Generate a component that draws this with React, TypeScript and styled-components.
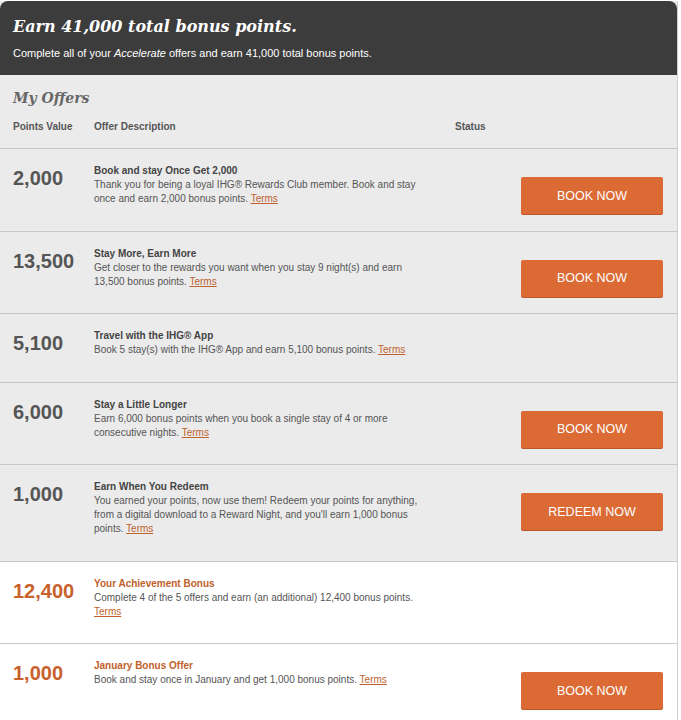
import React from 'react';
import styled, { createGlobalStyle } from 'styled-components';

const GlobalStyle = createGlobalStyle`
  body {
    margin: 0;
    background: #ffffff;
    font-family: "Liberation Sans", Arial, sans-serif;
  }
`;

const Panel = styled.div`
  width: 677px;
  margin-top: 1px;
  border-right: 1px solid #cfcfcf;
  background: #ebebeb;
`;

const Banner = styled.div`
  background: #3c3c3c;
  border-radius: 8px 8px 0 0;
  padding: 13px 13px 14px;
  color: #ffffff;
`;

const BannerTitle = styled.h1`
  margin: 0 0 5px;
  font-family: "DejaVu Serif", Georgia, serif;
  font-style: italic;
  font-weight: 700;
  font-size: 16px;
  line-height: 26px;
`;

const BannerText = styled.p`
  margin: 0;
  font-size: 11px;
  line-height: 16px;
`;

const OffersHead = styled.div`
  padding: 13px 13px 14px;
  border-bottom: 1px solid #c8c8c8;
`;

const SectionTitle = styled.h2`
  margin: 0 0 12px;
  font-family: "DejaVu Serif", Georgia, serif;
  font-style: italic;
  font-weight: 700;
  font-size: 14px;
  line-height: 20px;
  color: #666666;
`;

const Columns = styled.div`
  display: grid;
  grid-template-columns: 81px 361px 1fr;
  font-size: 10px;
  font-weight: 700;
  line-height: 14px;
  color: #555555;
`;

const Row = styled.div<{ $bonus?: boolean }>`
  display: grid;
  grid-template-columns: 81px 330px 1fr;
  align-items: start;
  padding: 15px 14px 16.5px 13px;
  background: ${p => (p.$bonus ? '#ffffff' : '#ebebeb')};
  border-bottom: 1px solid #c8c8c8;
`;

const Points = styled.div<{ $bonus?: boolean }>`
  margin-top: 2px;
  font-size: 20px;
  font-weight: 700;
  line-height: 24px;
  color: ${p => (p.$bonus ? '#c8612c' : '#555555')};
`;

const Description = styled.div`
  padding-bottom: 8px;
  font-size: 10px;
  line-height: 14px;
  color: #555555;
`;

const OfferTitle = styled.div<{ $bonus?: boolean }>`
  font-weight: 700;
  color: ${p => (p.$bonus ? '#c05f2c' : '#444444')};
`;

const Terms = styled.a`
  color: #c0622e;
  text-decoration: underline;
  cursor: pointer;
`;

const Status = styled.div`
  display: flex;
  justify-content: flex-end;
  padding-top: 13px;
`;

const ActionButton = styled.button`
  width: 142px;
  height: 37px;
  border: none;
  border-radius: 2px;
  background: #dc6a35;
  box-shadow: 0 1px 0 #b9562a;
  color: #ffffff;
  font-family: "Liberation Sans", Arial, sans-serif;
  font-size: 12.5px;
  text-transform: uppercase;
  cursor: pointer;
`;

type Offer = {
  points: string;
  title: string;
  text: string;
  action?: string;
  bonus?: boolean;
};

const offers: Offer[] = [
  {
    points: '2,000',
    title: 'Book and stay Once Get 2,000',
    text: 'Thank you for being a loyal IHG® Rewards Club member. Book and stay once and earn 2,000 bonus points.',
    action: 'Book now',
  },
  {
    points: '13,500',
    title: 'Stay More, Earn More',
    text: 'Get closer to the rewards you want when you stay 9 night(s) and earn 13,500 bonus points.',
    action: 'Book now',
  },
  {
    points: '5,100',
    title: 'Travel with the IHG® App',
    text: 'Book 5 stay(s) with the IHG® App and earn 5,100 bonus points.',
  },
  {
    points: '6,000',
    title: 'Stay a Little Longer',
    text: 'Earn 6,000 bonus points when you book a single stay of 4 or more consecutive nights.',
    action: 'Book now',
  },
  {
    points: '1,000',
    title: 'Earn When You Redeem',
    text: "You earned your points, now use them! Redeem your points for anything, from a digital download to a Reward Night, and you'll earn 1,000 bonus points.",
    action: 'Redeem now',
  },
  {
    points: '12,400',
    title: 'Your Achievement Bonus',
    text: 'Complete 4 of the 5 offers and earn (an additional) 12,400 bonus points.',
    bonus: true,
  },
  {
    points: '1,000',
    title: 'January Bonus Offer',
    text: 'Book and stay once in January and get 1,000 bonus points.',
    action: 'Book now',
    bonus: true,
  },
];

const App: React.FC = () => {
  return (
    <>
      <GlobalStyle />
      <Panel>
        <Banner>
          <BannerTitle>Earn 41,000 total bonus points.</BannerTitle>
          <BannerText>
            Complete all of your <em>Accelerate</em> offers and earn 41,000 total bonus points.
          </BannerText>
        </Banner>
        <OffersHead>
          <SectionTitle>My Offers</SectionTitle>
          <Columns>
            <span>Points Value</span>
            <span>Offer Description</span>
            <span>Status</span>
          </Columns>
        </OffersHead>
        {offers.map((offer, i) => (
          <Row key={i} $bonus={offer.bonus}>
            <Points $bonus={offer.bonus}>{offer.points}</Points>
            <Description>
              <OfferTitle $bonus={offer.bonus}>{offer.title}</OfferTitle>
              {offer.text} <Terms>Terms</Terms>
            </Description>
            <Status>{offer.action && <ActionButton>{offer.action}</ActionButton>}</Status>
          </Row>
        ))}
      </Panel>
    </>
  );
};

export default App;
